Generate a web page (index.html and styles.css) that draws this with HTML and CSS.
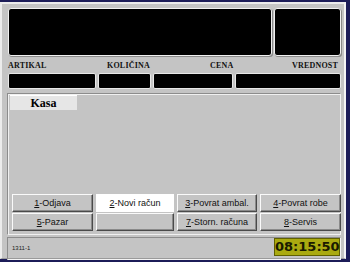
FILE: index.html
```html
<!DOCTYPE html>
<html lang="en">
<head>
    <meta charset="UTF-8">
    <title>Kasa</title>
    <link rel="stylesheet" href="styles.css">
</head>
<body>
    <div class="window">
        <div class="displays">
            <div class="display main"></div>
            <div class="display side"></div>
        </div>
        <div class="labels">
            <span class="lbl-artikal">ARTIKAL</span>
            <span class="lbl-kolicina">KOLIČINA</span>
            <span class="lbl-cena">CENA</span>
            <span class="lbl-vrednost">VREDNOST</span>
        </div>
        <div class="fields">
            <div class="field f1"></div>
            <div class="field f2"></div>
            <div class="field f3"></div>
            <div class="field f4"></div>
        </div>
        <div class="panel">
            <div class="tab">Kasa</div>
            <div class="buttons">
                <button class="btn"><u>1</u>-Odjava</button>
                <button class="btn active"><u>2</u>-Novi račun</button>
                <button class="btn"><u>3</u>-Povrat ambal.</button>
                <button class="btn"><u>4</u>-Povrat robe</button>
                <button class="btn"><u>5</u>-Pazar</button>
                <button class="btn"></button>
                <button class="btn"><u>7</u>-Storn. računa</button>
                <button class="btn"><u>8</u>-Servis</button>
            </div>
        </div>
        <div class="status">
            <span class="code">1311-1</span>
            <span class="clock">08:15:50</span>
        </div>
    </div>
</body>
</html>
```

FILE: styles.css
```css
body {
    margin: 0;
    background-color: #1c1c58;
    font-family: "Liberation Sans", Arial, sans-serif;
    width: 350px;
    height: 262px;
    overflow: hidden;
}

.window {
    box-sizing: border-box;
    width: 346px;
    height: 257px;
    margin-top: 2px;
    background-color: #c4c4c4;
    border-top: 2px solid #ececec;
    border-left: 2px solid #ececec;
    border-right: 2px solid #f4f4f4;
    border-bottom: 1px solid #9a9a9a;
    padding: 4px 3px 0 5px;
}

.displays {
    display: flex;
    gap: 2px;
    margin-left: 1px;
}

.display {
    box-sizing: border-box;
    height: 48px;
    background-color: #000;
    border: 1px solid #f0f0f0;
    border-radius: 3px;
    box-shadow: 1px 1px 0 #8a8a8a;
}

.display.main {
    width: 265px;
}

.display.side {
    width: 67px;
}

.labels {
    position: relative;
    height: 13px;
    margin-top: 4px;
    font-family: "Liberation Serif", "Times New Roman", serif;
    font-weight: bold;
    font-size: 8px;
    letter-spacing: 0.2px;
    color: #111;
}

.labels span {
    position: absolute;
    top: 1px;
}

.lbl-artikal { left: 1px; }
.lbl-kolicina { left: 100px; }
.lbl-cena { left: 203px; }
.lbl-vrednost { left: 285px; }

.fields {
    display: flex;
    gap: 2px;
    margin-left: 1px;
}

.field {
    box-sizing: border-box;
    height: 16px;
    background-color: #000;
    border: 1px solid #e8e8e8;
    border-radius: 2px;
}

.f1 { width: 88px; }
.f2 { width: 53px; }
.f3 { width: 81px; }
.f4 { width: 106px; }

.panel {
    box-sizing: border-box;
    height: 142px;
    margin-top: 4px;
    border: 1px solid #8c8c8c;
    border-right-color: #f0f0f0;
    border-bottom-color: #f0f0f0;
    box-shadow: inset 1px 1px 0 #f0f0f0;
    display: flex;
    flex-direction: column;
    justify-content: space-between;
    padding: 1px 2px 3px 2px;
}

.tab {
    width: 67px;
    height: 14px;
    background-color: #e6e6e6;
    border-top: 1px solid #fff;
    font-family: "Liberation Serif", "Times New Roman", serif;
    font-weight: bold;
    font-size: 12px;
    line-height: 14px;
    text-align: center;
    color: #000;
}

.buttons {
    display: grid;
    grid-template-columns: 81px 78px 80px 81px;
    grid-auto-rows: 18px;
    column-gap: 3px;
    row-gap: 1px;
    margin-left: 2px;
}

.btn {
    margin: 0;
    padding: 0;
    background-color: #c4c4c4;
    border: 1px solid;
    border-color: #fafafa #4a4a4a #4a4a4a #fafafa;
    box-shadow: inset -1px -1px 0 #8a8a8a;
    font-family: "Liberation Sans", Arial, sans-serif;
    font-size: 9px;
    color: #111;
}

.btn.active {
    background-color: #fff;
    border-color: #fff;
    box-shadow: none;
}

.status {
    box-sizing: border-box;
    height: 23px;
    margin-top: 2px;
    border: 1px solid #8c8c8c;
    border-right-color: #f4f4f4;
    border-bottom-color: #f4f4f4;
    display: flex;
    justify-content: space-between;
    align-items: flex-start;
    padding: 0 0 0 4px;
}

.code {
    font-size: 6px;
    color: #222;
    margin-top: 7px;
}

.clock {
    box-sizing: border-box;
    width: 66px;
    height: 18px;
    background-color: #aaaa10;
    border: 1px solid #606000;
    font-family: "DejaVu Sans", sans-serif;
    font-weight: bold;
    font-size: 13px;
    line-height: 16px;
    text-align: center;
    color: #1a1a00;
}
```
